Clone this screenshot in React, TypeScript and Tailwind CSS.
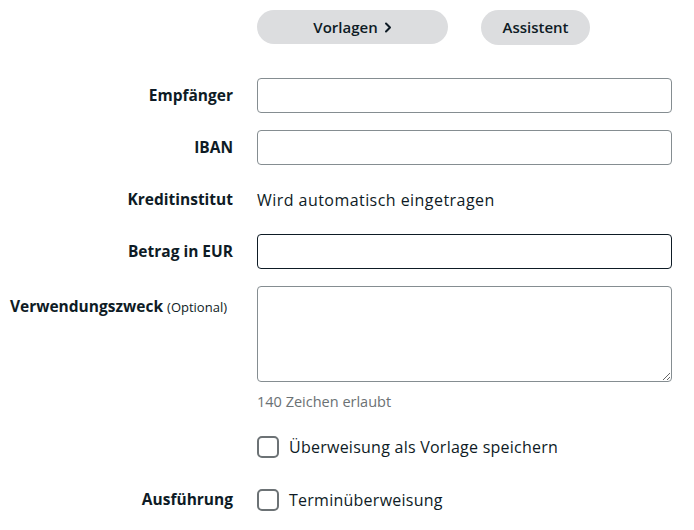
import React from "react";

// Überweisungsformular — label column right-aligned, fields on the right

const labelCls =
  "w-[233px] shrink-0 text-right text-[15.5px] font-bold text-[#0e1b25]";

function Row({
  label,
  children,
  top = false,
}: {
  label: React.ReactNode;
  children: React.ReactNode;
  top?: boolean;
}) {
  return (
    <div className={`flex ${top ? "items-start" : "items-center"} gap-6`}>
      <div className={labelCls}>{label}</div>
      <div className="w-[415px]">{children}</div>
    </div>
  );
}

function TextInput({ dark = false }: { dark?: boolean }) {
  return (
    <input
      type="text"
      className={`block h-[35px] w-full rounded-[4px] border bg-white px-3 text-[15px] outline-none ${
        dark ? "border-[#0e1b25]" : "border-[#858d91]"
      }`}
    />
  );
}

function Checkbox({ label }: { label: string }) {
  return (
    <label className="flex items-center gap-[10px] text-[16px] tracking-[0.25px] text-[#0e1b25]">
      <span className="block h-[22px] w-[22px] rounded-[5px] border-2 border-[#6c7275] bg-white" />
      {label}
    </label>
  );
}

export default function App() {
  return (
    <div
      className="h-[530px] w-[694px] bg-white text-[#0e1b25]"
      style={{ fontFamily: "'Open Sans', 'Noto Sans', sans-serif" }}
    >
      <div className="flex gap-[33px] pl-[257px] pt-[10px]">
        <button className="flex h-[34px] w-[191px] items-center justify-center gap-[6px] rounded-full bg-[#dcdddf] text-[15px] font-semibold text-[#0e1b25]">
          Vorlagen
          <svg width="8" height="11" viewBox="0 0 8 11" fill="none">
            <path
              d="M2 1.5 L6 5.5 L2 9.5"
              stroke="#0e1b25"
              strokeWidth="2"
              strokeLinecap="round"
              strokeLinejoin="round"
            />
          </svg>
        </button>
        <button className="h-[35px] w-[109px] rounded-full bg-[#dcdddf] text-[15px] font-semibold text-[#0e1b25]">
          Assistent
        </button>
      </div>

      <div className="mt-[33px] flex flex-col gap-[17px]">
        <Row label="Empfänger">
          <TextInput />
        </Row>
        <Row label="IBAN">
          <TextInput />
        </Row>
        <Row label="Kreditinstitut">
          <div className="flex h-[35px] items-center text-[16px] tracking-[0.45px]">
            Wird automatisch eingetragen
          </div>
        </Row>
        <Row label="Betrag in EUR">
          <TextInput dark />
        </Row>
        <div>
          <Row
            top
            label={
              <div className="pr-[6px] pt-[8px] leading-[24px]">
                Verwendungszweck{" "}
                <span className="text-[13px] font-normal">(Optional)</span>
              </div>
            }
          >
            <textarea className="block h-[96px] w-full resize-y rounded-[4px] border border-[#858d91] bg-white px-3 py-2 text-[15px] outline-none" />
          </Row>
          <div className="mt-[10px] pl-[257px] text-[14.5px] leading-[20px] text-[#6b7174]">
            140 Zeichen erlaubt
          </div>
        </div>
      </div>

      <div className="mt-[23px] pl-[257px]">
        <Checkbox label="Überweisung als Vorlage speichern" />
      </div>
      <div className="mt-[29px]">
        <Row label="Ausführung">
          <Checkbox label="Terminüberweisung" />
        </Row>
      </div>
    </div>
  );
}
